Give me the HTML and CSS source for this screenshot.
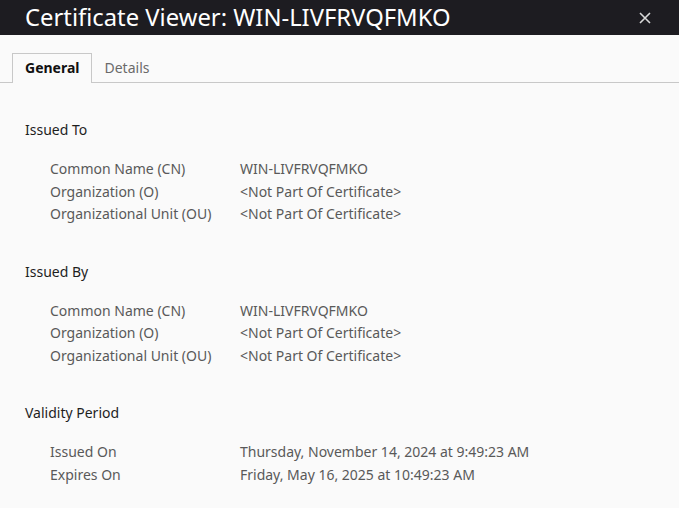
FILE: index.html
```html
<!DOCTYPE html>
<html>
<head>
  <title>Certificate Viewer</title>
  <link rel="stylesheet" href="styles.css">
</head>
<body>
  <div class="titlebar">
    <span class="title">Certificate Viewer: WIN-LIVFRVQFMKO</span>
    <svg class="close" width="12" height="12" viewBox="0 0 12 12">
      <path d="M1 1 L11 11 M11 1 L1 11" stroke="#d8d8d8" stroke-width="1.6"/>
    </svg>
  </div>
  <div class="tabs">
    <div class="tab active">General</div>
    <div class="tab">Details</div>
  </div>
  <div class="content">
    <div class="section">
      <div class="heading">Issued To</div>
      <div class="rows">
        <div class="label">Common Name (CN)</div><div class="value">WIN-LIVFRVQFMKO</div>
        <div class="label">Organization (O)</div><div class="value">&lt;Not Part Of Certificate&gt;</div>
        <div class="label">Organizational Unit (OU)</div><div class="value">&lt;Not Part Of Certificate&gt;</div>
      </div>
    </div>
    <div class="section">
      <div class="heading">Issued By</div>
      <div class="rows">
        <div class="label">Common Name (CN)</div><div class="value">WIN-LIVFRVQFMKO</div>
        <div class="label">Organization (O)</div><div class="value">&lt;Not Part Of Certificate&gt;</div>
        <div class="label">Organizational Unit (OU)</div><div class="value">&lt;Not Part Of Certificate&gt;</div>
      </div>
    </div>
    <div class="section">
      <div class="heading">Validity Period</div>
      <div class="rows">
        <div class="label">Issued On</div><div class="value">Thursday, November 14, 2024 at 9:49:23 AM</div>
        <div class="label">Expires On</div><div class="value">Friday, May 16, 2025 at 10:49:23 AM</div>
      </div>
    </div>
  </div>
</body>
</html>
```

FILE: styles.css
```css
body {
  margin: 0;
  background-color: #fafafa;
  font-family: "Noto Sans", "Open Sans", sans-serif;
  font-size: 14px;
  color: #1e1e1e;
}

.titlebar {
  height: 35px;
  background-color: #1d1c21;
  display: flex;
  align-items: center;
  justify-content: space-between;
  padding: 0 28px 0 25px;
}

.title {
  color: #ffffff;
  font-size: 23.8px;
  line-height: 35px;
}

.tabs {
  display: flex;
  padding: 18px 0 0 12px;
  border-bottom: 1px solid #c8c8c8;
}

.tab {
  height: 28px;
  line-height: 28px;
  padding: 0 11px 0 12px;
  color: #6a6a6a;
  border: 1px solid transparent;
  border-bottom: none;
  margin-bottom: -1px;
}

.tab.active {
  color: #111;
  font-weight: bold;
  border-color: #c8c8c8;
  background-color: #fafafa;
  height: 29px;
}

.content {
  padding: 36px 25px 0 25px;
}

.section {
  margin-bottom: 35px;
}

.heading {
  line-height: 22px;
  margin-bottom: 17px;
}

.rows {
  display: grid;
  grid-template-columns: 190px auto;
  padding-left: 25px;
  line-height: 22.5px;
  color: #595959;
}
```
